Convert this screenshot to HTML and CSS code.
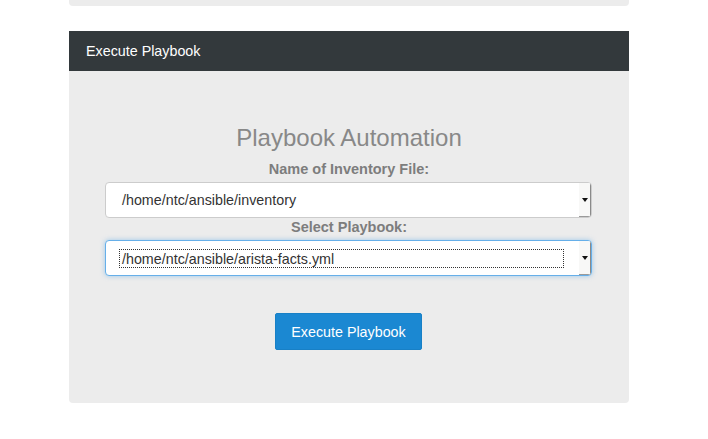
FILE: index.html
```html
<!DOCTYPE html>
<html>
<head>
<meta charset="utf-8">
<link rel="stylesheet" href="styles.css">
</head>
<body>
<div class="page">
  <div class="prev-card"></div>
  <div class="card">
    <div class="card-header">Execute Playbook</div>
    <div class="card-body">
      <h2 class="title">Playbook Automation</h2>
      <label class="label first">Name of Inventory File:</label>
      <div class="select">
        <span class="select-text">/home/ntc/ansible/inventory</span>
        <span class="select-arrow"><span class="tri"></span></span>
      </div>
      <label class="label">Select Playbook:</label>
      <div class="select focused">
        <span class="select-text"><span class="focus-ring">/home/ntc/ansible/arista-facts.yml</span></span>
        <span class="select-arrow"><span class="tri"></span></span>
      </div>
      <button class="btn">Execute Playbook</button>
    </div>
  </div>
</div>
</body>
</html>
```

FILE: styles.css
```css
html, body {
  margin: 0;
  padding: 0;
  background: #ffffff;
}
body {
  font-family: "Liberation Sans", Arial, sans-serif;
  font-size: 14.3px;
  color: #333333;
}
.page {
  width: 560px;
  margin-left: 69px;
}
.prev-card {
  height: 6px;
  background: #ececec;
  border-radius: 0 0 4px 4px;
  margin-bottom: 25px;
}
.card {
  display: flex;
  flex-direction: column;
}
.card-header {
  height: 40px;
  background: #33393c;
  color: #ffffff;
  padding-left: 17px;
  line-height: 40px;
  font-size: 14.3px;
}
.card-body {
  height: 332px;
  box-sizing: border-box;
  background: #ececec;
  border-radius: 0 0 4px 4px;
  padding-top: 54px;
  display: flex;
  flex-direction: column;
  align-items: center;
}
.title {
  margin: 0;
  font-size: 24px;
  font-weight: normal;
  line-height: 26px;
  color: #888888;
}
.label {
  display: block;
  font-weight: bold;
  font-size: 14.5px;
  line-height: 18px;
  color: #7d7d7d;
}
.label.first {
  margin-top: 9px;
}
.select {
  align-self: flex-start;
  margin-left: 36px;
  margin-top: 4px;
  width: 487px;
  height: 36px;
  box-sizing: border-box;
  border: 1px solid #cccccc;
  border-radius: 4px;
  background: #ffffff;
  display: flex;
  align-items: stretch;
  overflow: hidden;
}
.select-text {
  flex: 1;
  display: flex;
  align-items: center;
  padding-left: 16px;
  font-size: 14.3px;
  color: #333333;
}
.select-arrow {
  width: 11px;
  background: #f8f8f7;
  border-right: 1px solid #8a8a8a;
  border-bottom: 1px solid #9a9a9a;
  display: flex;
  align-items: center;
  justify-content: center;
}
.tri {
  width: 0;
  height: 0;
  border-left: 3px solid transparent;
  border-right: 3px solid transparent;
  border-top: 4px solid #111111;
}
.select.focused {
  border-color: #66afe9;
  box-shadow: 0 0 5px rgba(102, 175, 233, 0.6);
}
.focus-ring {
  display: block;
  width: 445px;
  margin-left: -3px;
  padding-left: 2px;
  box-sizing: border-box;
  height: 19px;
  line-height: 18px;
  border: 1px dotted #333333;
}
.btn {
  align-self: flex-start;
  margin-left: 206px;
  margin-top: 37px;
  width: 147px;
  height: 37px;
  padding: 0;
  border: 1px solid #1880c6;
  border-radius: 2px;
  background: #1b88d2;
  color: #ffffff;
  font-family: "Liberation Sans", Arial, sans-serif;
  font-size: 14.3px;
}
```
